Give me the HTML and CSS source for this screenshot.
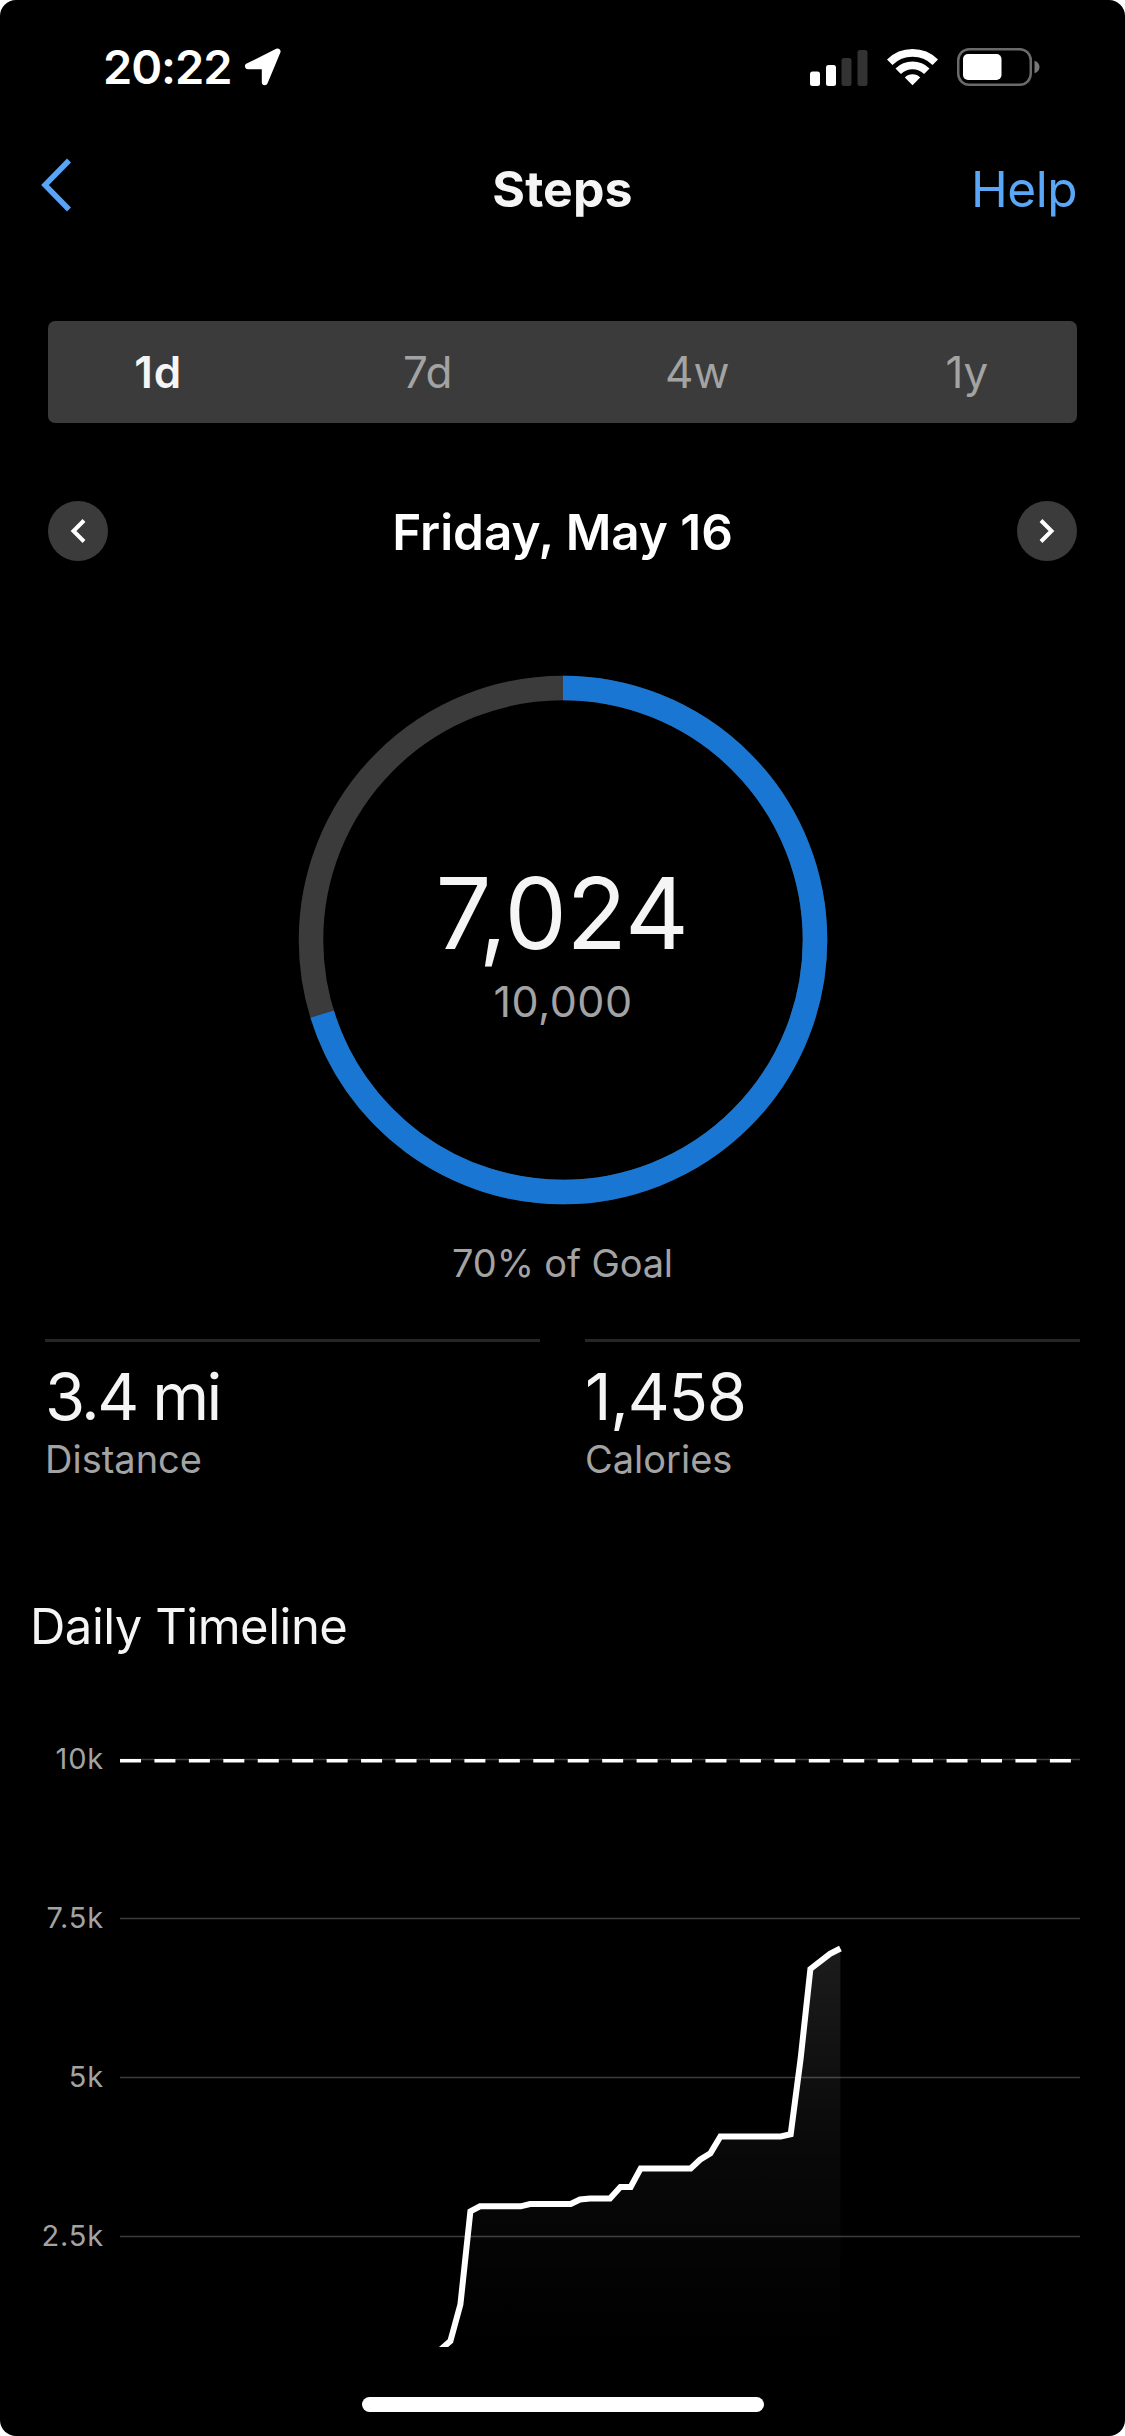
FILE: index.html
```html
<!DOCTYPE html>
<html lang="en">
<head>
<meta charset="utf-8">
<title>Steps</title>
<link rel="stylesheet" href="styles.css">
</head>
<body>
<div class="screen">
  <header class="status">
    <div class="status-left">
      <span class="time">20:22</span>
      <svg class="location" width="38" height="38" viewBox="0 0 38 38"><path d="M33.500 3.500 4 18.300H20.800V34.200Z" fill="#fff" stroke="#fff" stroke-width="6" stroke-linejoin="round"/></svg>
    </div>
    <div class="status-right">
      <svg width="58" height="37" viewBox="0 0 58 37"><g fill="#fff"><rect x="0" y="22.500" width="10" height="14.500" rx="2.500"/><rect x="16" y="16" width="10" height="21" rx="2.500"/></g><g fill="#333"><rect x="31.500" y="9" width="10" height="28" rx="2.500"/><rect x="47.500" y="1" width="10" height="36" rx="2.500"/></g></svg>
      <svg class="wifi" width="51" height="38" viewBox="0 0 51 38"><g fill="none" stroke="#fff" stroke-width="7.800"><path d="M2.700 14.200A32.500 32.500 0 0 1 48.300 14.200"/><path d="M11.200 23.200A20.500 20.500 0 0 1 39.800 23.200"/></g><path d="M25.500 37.200 17.800 29.400A11 11 0 0 1 33.200 29.400Z" fill="#fff"/></svg>
      <svg class="battery" width="83" height="38" viewBox="0 0 83 38"><rect x="1.250" y="1.250" width="72.500" height="35.500" rx="11" fill="none" stroke="#6a6a6a" stroke-width="2.500"/><rect x="6" y="6" width="38.500" height="26" rx="5" fill="#fff"/><path d="M77.500 12.800Q82.500 14.500 82.500 19T77.500 25.200Z" fill="#777"/></svg>
    </div>
  </header>

  <nav class="nav">
    <svg class="back" width="32" height="54" viewBox="0 0 32 54"><path d="M29 2.500 5 27 29 51.500" fill="none" stroke="#57a5f8" stroke-width="5.500"/></svg>
    <h1 class="title">Steps</h1>
    <a class="help">Help</a>
  </nav>

  <div class="tabs">
    <span class="tab active">1d</span><span class="tab">7d</span><span class="tab">4w</span><span class="tab">1y</span>
  </div>

  <div class="day">
    <span class="round"><svg width="60" height="60" viewBox="0 0 60 60"><path d="M36 19.500 25.500 30 36 40.500" fill="none" stroke="#fff" stroke-width="4"/></svg></span>
    <h2 class="date">Friday, May 16</h2>
    <span class="round"><svg width="60" height="60" viewBox="0 0 60 60"><path d="M24 19.500 34.500 30 24 40.500" fill="none" stroke="#fff" stroke-width="4"/></svg></span>
  </div>

  <section class="goal">
    <svg class="ring" width="530" height="530" viewBox="-265 -265 530 530"><g fill="none" stroke-width="24.500" transform="rotate(-90)"><circle r="252" stroke="#3b3b3b"/><circle r="252" stroke="#1976d2" pathLength="100" stroke-dasharray="70.240 100"/></g></svg>
    <div class="goal-text">
      <div class="count">7,024</div>
      <div class="target">10,000</div>
    </div>
  </section>
  <p class="percent">70% of Goal</p>

  <section class="stats">
    <div class="stat"><div class="value distance">3.4 mi</div><div class="label">Distance</div></div>
    <div class="stat"><div class="value">1,458</div><div class="label">Calories</div></div>
  </section>

  <h3 class="heading">Daily Timeline</h3>

  <section class="chart">
    <div class="axis"><span>10k</span><span>7.5k</span><span>5k</span><span>2.5k</span></div>
    <svg class="plot" width="960" height="617" viewBox="120 1730 960 617">
      <defs><linearGradient id="fade" gradientUnits="userSpaceOnUse" x1="0" y1="1948" x2="0" y2="2346"><stop offset="0" stop-color="#fff" stop-opacity=".11"/><stop offset=".5" stop-color="#fff" stop-opacity=".035"/><stop offset="1" stop-color="#fff" stop-opacity="0"/></linearGradient></defs>
      <path d="M120 1759.500H1080M120 1918.500H1080M120 2077.500H1080M120 2236.500H1080" stroke="#3c3c3c" stroke-width="1.300"/>
      <path d="M439 2351 450.400 2341 460.400 2304.500 470.400 2211.300 480 2206.300H520.700L530 2204H570.700L580 2199.500 590 2198.500H610L620.400 2187H630.700L640.700 2168.400H690.700L700 2159.700 710.400 2153.300 720.400 2136.400H780.700L790.700 2134.200 800.600 2059 810.400 1969 830 1953.800 840.400 1948.500V2351Z" fill="url(#fade)"/>
      <path d="M120 1760.700H1071" stroke="#fff" stroke-width="3.600" stroke-dasharray="21 13.440"/>
      <path d="M439 2351 450.400 2341 460.400 2304.500 470.400 2211.300 480 2206.300H520.700L530 2204H570.700L580 2199.500 590 2198.500H610L620.400 2187H630.700L640.700 2168.400H690.700L700 2159.700 710.400 2153.300 720.400 2136.400H780.700L790.700 2134.200 800.600 2059 810.400 1969 830 1953.800 840.400 1948.500" fill="none" stroke="#fff" stroke-width="6"/>
    </svg>
  </section>
  <div class="home"></div>
</div>
</body>
</html>
```
FILE: styles.css
```css
* { box-sizing: border-box; }
body { margin: 0; background: #fff; }
h1, h2, h3, p { margin: 0; font-weight: 400; }
svg { display: block; flex: none; }
.screen { display: flex; flex-direction: column; width: 1125px; height: 2436px; overflow: hidden; border-radius: 16px; background: #000; color: #f5f5f5; font-family: Inter, "Liberation Sans", sans-serif; white-space: nowrap; }
.status { height: 134px; padding: 0 85px 0 103px; display: flex; justify-content: space-between; align-items: center; color: #fff; }
.status-left, .status-right { display: flex; align-items: center; }
.status-left { gap: 13px; }
.time { font-size: 47px; font-weight: 600; line-height: 56px; letter-spacing: -1.100px; }
.wifi { margin-left: 19px; }
.battery { margin-left: 19px; }
.nav { height: 187px; padding: 0 48px 0 40px; display: grid; grid-template-columns: 1fr auto 1fr; align-items: start; }
.back { margin-top: 24px; }
.title { margin: 25px 0 0 8px; font-size: 50px; font-weight: 700; line-height: 60px; letter-spacing: .1px; }
.help { margin-top: 25px; justify-self: end; font-size: 49.500px; line-height: 60px; color: #5ba7f7; letter-spacing: -.5px; }
.tabs { height: 102px; margin: 0 48px; border-radius: 7px; background: #3b3b3b; display: grid; grid-template-columns: repeat(4, 269.600px); justify-content: center; align-items: center; text-align: center; font-size: 44px; color: #a3a3a3; }
.active { font-weight: 600; color: #f5f5f5; letter-spacing: .8px; }
.day { margin: 78px 48px 0; height: 60px; display: flex; justify-content: space-between; align-items: center; color: #fff; }
.round { width: 60px; height: 60px; border-radius: 50%; background: #3b3b3b; }
.date { padding-top: 1px; font-size: 49.500px; font-weight: 600; line-height: 60px; letter-spacing: -.050px; }
.goal { margin-top: 113.500px; height: 530px; display: grid; justify-content: center; text-align: center; }
.ring, .goal-text { grid-area: 1 / 1; }
.goal-text { padding-top: 178.500px; }
.count { padding-right: 1px; font-size: 99px; line-height: 120px; letter-spacing: -.400px; }
.target { padding-left: 1px; font-size: 43px; line-height: 56px; letter-spacing: .5px; color: #a3a3a3; }
.percent { margin-top: 34.500px; text-align: center; font-size: 38px; line-height: 48px; letter-spacing: -.150px; color: #a3a3a3; }
.stats { margin: 52px 45px 0; display: grid; grid-template-columns: 1fr 1fr; gap: 45px; }
.stat { border-top: 3px solid #262626; padding-top: 15px; }
.value { font-size: 65px; line-height: 80px; letter-spacing: -1.200px; }
.distance { letter-spacing: -2.600px; }
.label { margin-top: -1px; font-size: 38px; line-height: 46px; color: #a3a3a3; }
.heading { margin: 115px 0 0 30px; font-size: 49px; line-height: 60px; letter-spacing: -.5px; }
.chart { height: 617px; margin-top: 73px; display: flex; gap: 16px; }
.axis { width: 104px; padding-top: 11px; display: grid; grid-auto-rows: 159px; text-align: right; font-size: 29px; line-height: 36px; letter-spacing: .8px; color: #a3a3a3; }
.home { width: 402px; height: 15px; margin: 50px auto 0; border-radius: 8px; background: #fff; }
```
